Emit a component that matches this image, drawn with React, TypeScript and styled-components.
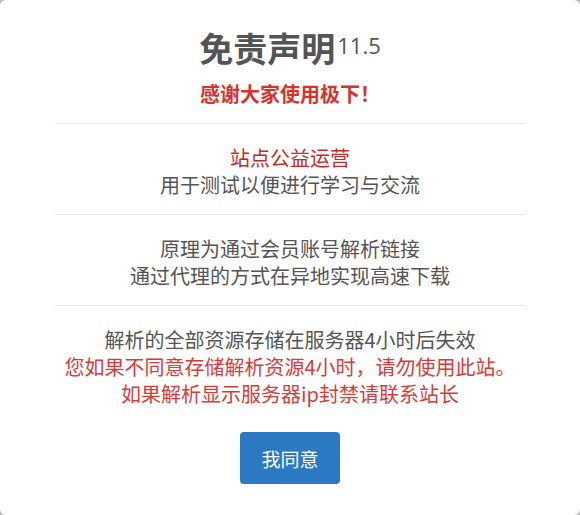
import React from "react";
import styled, { createGlobalStyle } from "styled-components";

const Global = createGlobalStyle`
  html, body { margin: 0; padding: 0; background: #bdbdbd; }
  body { font-family: "Microsoft YaHei", "Noto Sans CJK SC", "Noto Sans", sans-serif; }
  * { box-sizing: border-box; }
`;

const Card = styled.div`
  width: 580px;
  height: 515px;
  background: #fff;
  border-radius: 6px;
  padding-top: 21px;
  display: flex;
  flex-direction: column;
  align-items: center;
  text-align: center;
  overflow: hidden;
`;

const Title = styled.h2`
  margin: 0;
  font-size: 34px;
  line-height: 48px;
  font-weight: 700;
  color: #545454;
`;

const Version = styled.span`
  font-size: 22px;
  font-weight: 400;
  vertical-align: 8px;
  margin-left: 2px;
  font-family: "Open Sans", "Noto Sans", sans-serif;
`;

const Thanks = styled.div`
  margin-top: 8px;
  font-size: 20px;
  line-height: 28px;
  font-weight: 700;
  color: #d8322e;
`;

const Section = styled.div`
  align-self: stretch;
  margin: 15px 55px 0;
  border-top: 1px solid #e8e8e8;
  padding: 20px 0 16px;
  font-size: 20px;
  line-height: 27px;
  color: #555;
  & + & { margin-top: 0; }
`;

const Line = styled.div<{ $tone?: "dark" | "light" }>`
  color: ${(p) => (p.$tone === "dark" ? "#c5282a" : p.$tone === "light" ? "#d63c39" : "#555")};
  white-space: nowrap;
`;

const Agree = styled.button`
  margin-top: 9px;
  width: 100px;
  height: 52px;
  border: none;
  border-radius: 4px;
  background: #2b79c2;
  color: #fff;
  font-family: inherit;
  font-size: 19px;
  cursor: pointer;
`;

export default function App() {
  return (
    <>
      <Global />
      <Card>
        <Title>
          免责声明<Version>11.5</Version>
        </Title>
        <Thanks>感谢大家使用极下！</Thanks>
        <Section>
          <Line $tone="dark">站点公益运营</Line>
          <Line>用于测试以便进行学习与交流</Line>
        </Section>
        <Section>
          <Line>原理为通过会员账号解析链接</Line>
          <Line>通过代理的方式在异地实现高速下载</Line>
        </Section>
        <Section>
          <Line>解析的全部资源存储在服务器4小时后失效</Line>
          <Line $tone="light">您如果不同意存储解析资源4小时，请勿使用此站。</Line>
          <Line $tone="light">如果解析显示服务器ip封禁请联系站长</Line>
        </Section>
        <Agree>我同意</Agree>
      </Card>
    </>
  );
}
